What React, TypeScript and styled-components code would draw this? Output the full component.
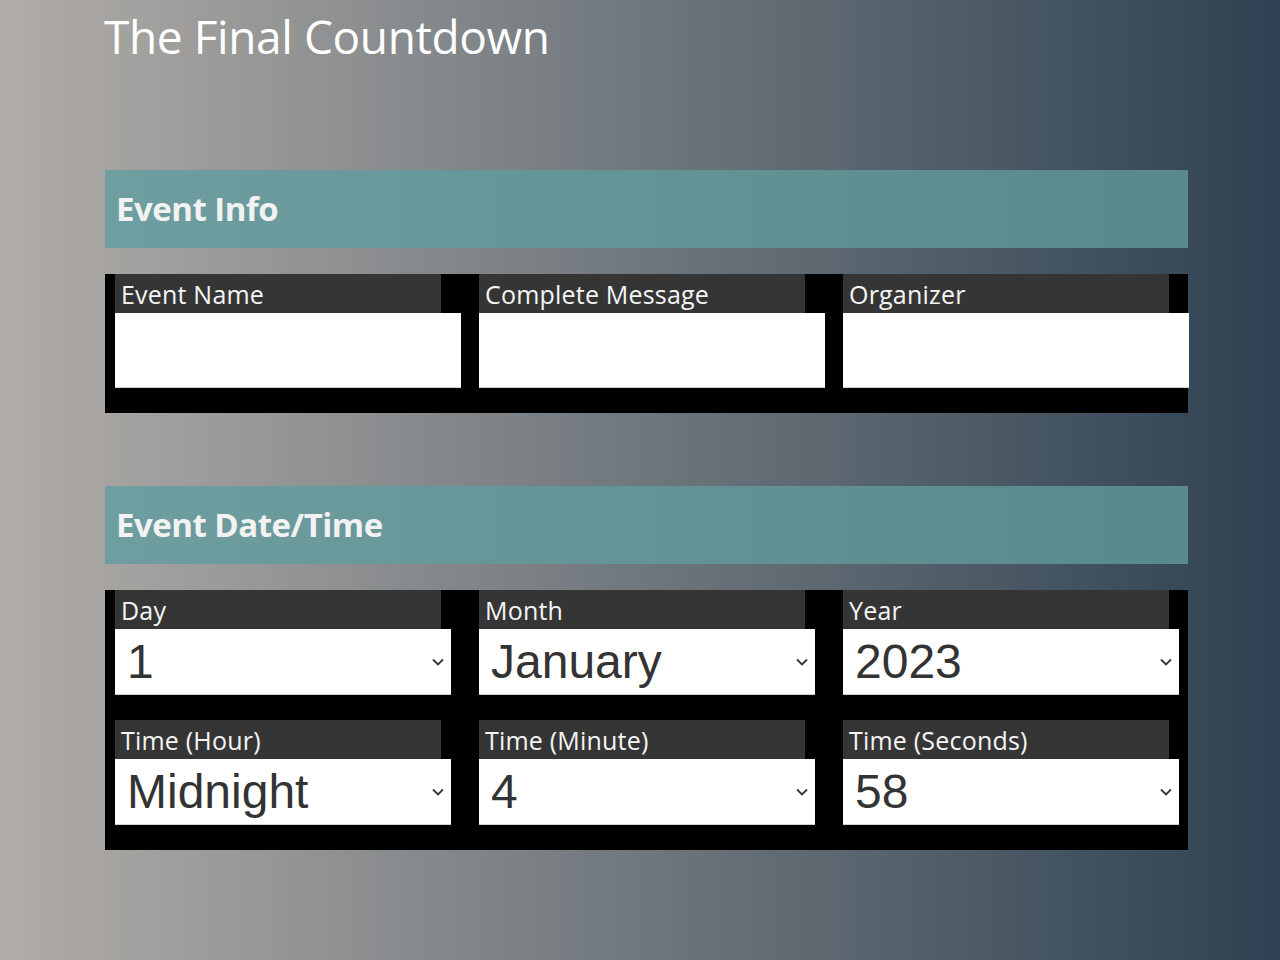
import styled, {createGlobalStyle} from 'styled-components';

const DAYS = Array.from({length: 31}, (_, i) => String(i + 1));
const MONTHS = [
  'January',
  'February',
  'March',
  'April',
  'May',
  'June',
  'July',
  'August',
  'September',
  'October',
  'November',
  'December',
];
const YEARS = ['2023', '2024', '2025', '2026'];
const HOURS = [
  'Midnight',
  ...Array.from({length: 11}, (_, i) => `${i + 1} AM`),
  'Noon',
  ...Array.from({length: 11}, (_, i) => `${i + 1} PM`),
];
const SIXTY = Array.from({length: 60}, (_, i) => String(i));

const App = () => {
  return (
    <>
      <GlobalStyle />
      <Page>
        <Title>The Final Countdown</Title>

        <Section>
          <SectionTitle>Event Info</SectionTitle>
          <Panel>
            <Row>
              <Field label="Event Name">
                <TextInput type="text" />
              </Field>
              <Field label="Complete Message">
                <TextInput type="text" />
              </Field>
              <Field label="Organizer">
                <TextInput type="text" />
              </Field>
            </Row>
          </Panel>
        </Section>

        <Section>
          <SectionTitle>Event Date/Time</SectionTitle>
          <Panel>
            <Row>
              <Field label="Day">
                <Picker options={DAYS} value="1" />
              </Field>
              <Field label="Month">
                <Picker options={MONTHS} value="January" />
              </Field>
              <Field label="Year">
                <Picker options={YEARS} value="2023" />
              </Field>
            </Row>
            <Row>
              <Field label="Time (Hour)">
                <Picker options={HOURS} value="Midnight" />
              </Field>
              <Field label="Time (Minute)">
                <Picker options={SIXTY} value="4" />
              </Field>
              <Field label="Time (Seconds)">
                <Picker options={SIXTY} value="58" />
              </Field>
            </Row>
          </Panel>
        </Section>
      </Page>
    </>
  );
};

const Field = ({label, children}: {label: string; children: any}) => {
  return (
    <FieldBox>
      <Label>{label}</Label>
      {children}
    </FieldBox>
  );
};

const Picker = ({options, value}: {options: string[]; value: string}) => {
  return (
    <SelectWrap>
      <Select defaultValue={value}>
        {options.map((o) => (
          <option key={o} value={o}>
            {o}
          </option>
        ))}
      </Select>
      <Chevron width="12" height="8" viewBox="0 0 12 8">
        <polyline points="1,1.5 6,6.5 11,1.5" />
      </Chevron>
    </SelectWrap>
  );
};

const GlobalStyle = createGlobalStyle`
  html, body {
    margin: 0;
    padding: 0;
  }
  body {
    width: 1280px;
    min-height: 960px;
    background: linear-gradient(to right, #b1ada8 0%, #2e4152 100%);
    font-family: 'Open Sans', 'Noto Sans', sans-serif;
  }
`;

const Page = styled.div`
  width: 1083px;
  padding-left: 105px;
  padding-bottom: 40px;
`;

const Title = styled.h1`
  margin: 0 0 94px -1px;
  height: 76px;
  line-height: 72px;
  font-size: 46px;
  font-weight: 400;
  letter-spacing: -0.4px;
  color: #ffffff;
`;

const Section = styled.section`
  margin-bottom: 73px;
`;

const SectionTitle = styled.h2`
  margin: 0 0 26px;
  height: 78px;
  line-height: 78px;
  padding-left: 11px;
  font-size: 33px;
  font-weight: 700;
  letter-spacing: -0.5px;
  color: #f2f2f2;
  background: linear-gradient(to right, #6f9ea0, #5a898d);
`;

const Panel = styled.div`
  background: #000;
  padding: 0 0 25px 10px;
  display: flex;
  flex-direction: column;
  gap: 25px;
`;

const Row = styled.div`
  display: grid;
  grid-template-columns: repeat(3, 346px);
  column-gap: 18px;
`;

const FieldBox = styled.div`
  display: flex;
  flex-direction: column;
`;

const Label = styled.div`
  width: 326px;
  height: 39px;
  box-sizing: border-box;
  padding-left: 6px;
  line-height: 40px;
  font-size: 25px;
  letter-spacing: 0.2px;
  color: #f5f5f5;
  background: #353535;
`;

const TextInput = styled.input`
  width: 346px;
  height: 75px;
  box-sizing: border-box;
  border: none;
  border-bottom: 1px solid #cfcfcf;
  margin: 0;
  padding: 0 10px;
  background: #fff;
  font-family: 'Liberation Sans', Arial, sans-serif;
  font-size: 24px;
  outline: none;
`;

const SelectWrap = styled.div`
  position: relative;
  width: 336px;
  height: 66px;
`;

const Select = styled.select`
  appearance: none;
  width: 100%;
  height: 100%;
  box-sizing: border-box;
  border: none;
  border-bottom: 1px solid #cfcfcf;
  border-radius: 0;
  margin: 0;
  padding: 0 30px 0 12px;
  background: #fff;
  color: #333;
  font-family: 'Liberation Sans', Arial, sans-serif;
  font-size: 48px;
  outline: none;
`;

const Chevron = styled.svg`
  position: absolute;
  right: 7px;
  top: 29px;
  pointer-events: none;

  polyline {
    fill: none;
    stroke: #333;
    stroke-width: 1.8;
  }
`;

export default App;
